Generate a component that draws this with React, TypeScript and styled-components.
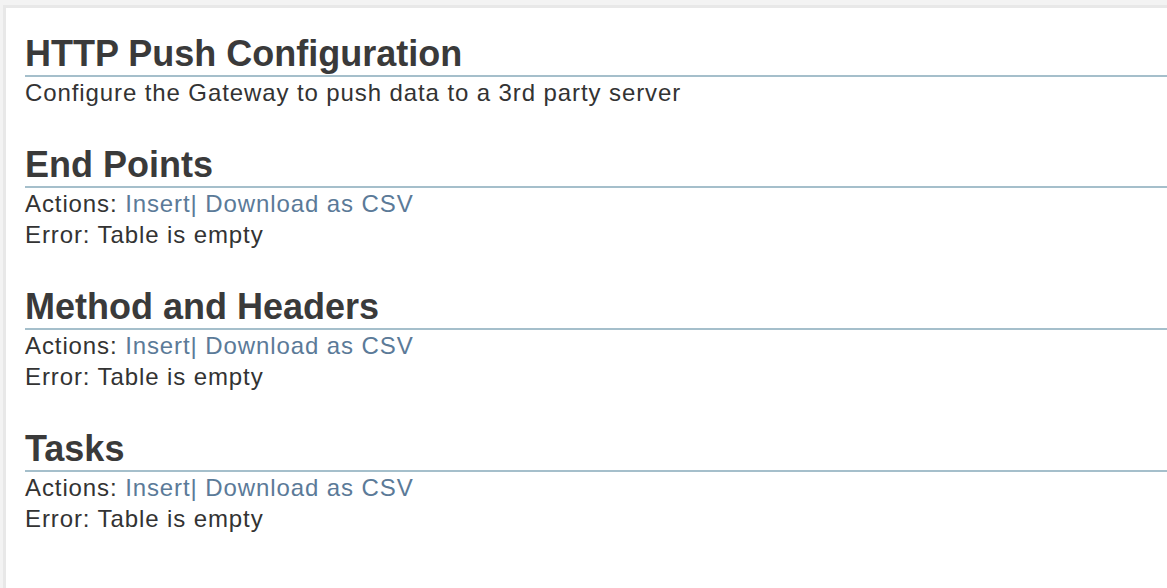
import React from "react";
import styled, { createGlobalStyle } from "styled-components";

const GlobalStyle = createGlobalStyle`
  html, body {
    margin: 0;
    padding: 0;
    background: #f3f3f3;
    overflow: hidden;
  }
  body {
    font-family: "Liberation Sans", Arial, sans-serif;
    color: #333;
  }
`;

const Frame = styled.div`
  padding: 5px 0 0 3px;
  height: 588px;
  box-sizing: border-box;
  display: flex;
`;

const Panel = styled.main`
  flex: 1;
  box-sizing: border-box;
  background: #fff;
  border-top: 3px solid #e8e8e8;
  border-left: 3px solid #e8e8e8;
  padding: 25px 0 0 19px;
`;

const Section = styled.section`
  & + & {
    margin-top: 36px;
  }
`;

const Heading = styled.h2`
  margin: 0;
  font-size: 36px;
  line-height: 42px;
  font-weight: bold;
  color: #3a3a3a;
  border-bottom: 2px solid #a5bfcb;
`;

const Line = styled.div`
  font-size: 24px;
  line-height: 31px;
  letter-spacing: 0.9px;
  color: #333;
  white-space: nowrap;
`;

const ActionLink = styled.a`
  color: #5b7a98;
  text-decoration: none;
  cursor: pointer;
`;

interface TableSectionProps {
  title: string;
}
const TableSection: React.FC<TableSectionProps> = ({ title }) => (
  <Section>
    <Heading>{title}</Heading>
    <Line>
      Actions: <ActionLink>Insert</ActionLink>
      <ActionLink>| Download as CSV</ActionLink>
    </Line>
    <Line>Error: Table is empty</Line>
  </Section>
);

const App: React.FC = () => (
  <>
    <GlobalStyle />
    <Frame>
      <Panel>
        <Section>
          <Heading>HTTP Push Configuration</Heading>
          <Line>Configure the Gateway to push data to a 3rd party server</Line>
        </Section>
        <TableSection title="End Points" />
        <TableSection title="Method and Headers" />
        <TableSection title="Tasks" />
      </Panel>
    </Frame>
  </>
);
export default App;
